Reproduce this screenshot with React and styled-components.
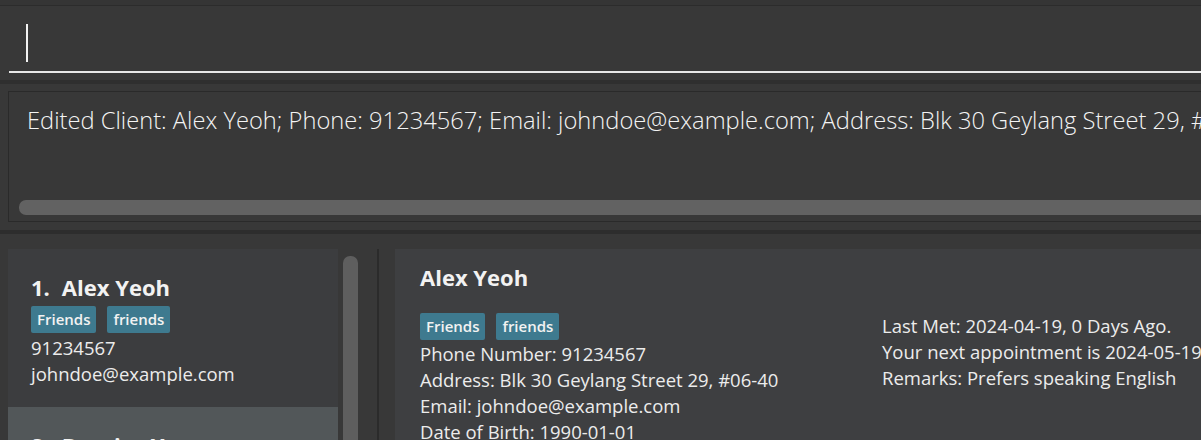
import React from 'react';
import styled, { createGlobalStyle } from 'styled-components';

const GlobalStyle = createGlobalStyle`
  html, body {
    margin: 0;
    padding: 0;
    background: #383838;
    overflow: hidden;
  }
  body {
    font-family: 'Open Sans', 'Noto Sans', sans-serif;
    color: #fff;
  }
`;

const Window = styled.div`
  width: 1201px;
  height: 440px;
  display: flex;
  flex-direction: column;
  background: #383838;
  overflow: hidden;
  border-top: 5px solid #353535;
`;

const CommandBar = styled.div`
  height: 67px;
  padding: 0 0 7px 9px;
  border-top: 1px solid #2c2c2c;
  border-bottom: 4px solid #2f2f2f;
  display: flex;
  flex-direction: column;
  justify-content: flex-end;
`;

const CommandField = styled.div`
  height: 56px;
  border-bottom: 2px solid #e8e8e8;
  padding: 7px 0 0 17px;
  box-sizing: border-box;
`;

const Caret = styled.div`
  width: 2px;
  height: 38px;
  background: #f2f2f2;
`;

const ResultPane = styled.div`
  padding: 7px 0 8px 8px;
  border-bottom: 4px solid #2d2d2d;
`;

const ResultBox = styled.div`
  height: 131px;
  border: 1px solid #2a2a2a;
  border-right: none;
  box-sizing: border-box;
  padding: 12px 0 0 18px;
  display: flex;
  flex-direction: column;
  justify-content: space-between;
  overflow: hidden;
`;

const ResultText = styled.div`
  font-size: 23.7px;
  font-weight: 300;
  white-space: nowrap;
  color: #f4f4f4;
`;

const HScroll = styled.div`
  height: 15px;
  margin: 0 0 6px -8px;
  background: #626262;
  border-radius: 7px 0 0 7px;
`;

const Lower = styled.div`
  flex: 1;
  display: flex;
  padding-top: 15px;
  min-height: 0;
`;

const ListPane = styled.div`
  width: 379px;
  display: flex;
  padding-left: 8px;
  box-sizing: border-box;
  gap: 5px;
  border-right: 2px solid #2b2b2b;
`;

const ListCards = styled.div`
  width: 330px;
  display: flex;
  flex-direction: column;
`;

const VScroll = styled.div`
  width: 15px;
  margin-top: 7px;
  background: #5e5e5e;
  border-radius: 7px 7px 0 0;
`;

const ListCard = styled.div`
  background: ${({ $selected }) => ($selected ? '#525759' : '#3c3d3f')};
  padding: 23px 0 0 23px;
  height: ${({ $selected }) => ($selected ? 'auto' : '158px')};
  flex: ${({ $selected }) => ($selected ? 1 : 'none')};
  box-sizing: border-box;
`;

const CardTitle = styled.div`
  font-size: 22px;
  font-weight: 700;
  color: #f2f2f2;
  display: flex;
  gap: 12px;
  line-height: 30px;
`;

const TagRow = styled.div`
  display: flex;
  gap: 11px;
  margin: ${({ $m }) => $m || '4px 0 2px'};
`;

const Tag = styled.span`
  background: #3e7a8f;
  color: #f2f2f2;
  font-size: 15px;
  font-weight: 600;
  padding: 0 6px;
  height: 27px;
  line-height: 27px;
  border-radius: 2px;
`;

const Line = styled.div`
  font-size: 18.5px;
  color: #ececec;
  line-height: 26px;
  white-space: nowrap;
`;

const DetailPane = styled.div`
  flex: 1;
  padding-left: 16px;
  overflow: hidden;
`;

const DetailCard = styled.div`
  background: #3e3f41;
  height: 100%;
  padding: 13px 0 0 25px;
  box-sizing: border-box;
`;

const DetailName = styled.div`
  font-size: 22px;
  font-weight: 700;
  color: #f2f2f2;
  line-height: 30px;
`;

const Columns = styled.div`
  display: grid;
  grid-template-columns: 462px 1fr;
  margin-top: 21px;
`;

const App = () => {
  return (
    <>
      <GlobalStyle />
      <Window>
        <CommandBar>
          <CommandField>
            <Caret />
          </CommandField>
        </CommandBar>
        <ResultPane>
          <ResultBox>
            <ResultText>
              Edited Client: Alex Yeoh; Phone: 91234567; Email: johndoe@example.com; Address: Blk 30 Geylang Street 29, #06-40
            </ResultText>
            <HScroll />
          </ResultBox>
        </ResultPane>
        <Lower>
          <ListPane>
            <ListCards>
              <ListCard>
                <CardTitle>
                  <span>1.</span>
                  <span>Alex Yeoh</span>
                </CardTitle>
                <TagRow>
                  <Tag>Friends</Tag>
                  <Tag>friends</Tag>
                </TagRow>
                <Line>91234567</Line>
                <Line>johndoe@example.com</Line>
              </ListCard>
              <ListCard $selected>
                <CardTitle>
                  <span>2.</span>
                  <span>Bernice Yu</span>
                </CardTitle>
              </ListCard>
            </ListCards>
            <VScroll />
          </ListPane>
          <DetailPane>
            <DetailCard>
              <DetailName>Alex Yeoh</DetailName>
              <Columns>
                <div>
                  <TagRow $m="0 0 1px">
                    <Tag>Friends</Tag>
                    <Tag>friends</Tag>
                  </TagRow>
                  <Line>Phone Number: 91234567</Line>
                  <Line>Address: Blk 30 Geylang Street 29, #06-40</Line>
                  <Line>Email: johndoe@example.com</Line>
                  <Line>Date of Birth: 1990-01-01</Line>
                </div>
                <div>
                  <Line>Last Met: 2024-04-19, 0 Days Ago.</Line>
                  <Line>Your next appointment is 2024-05-19</Line>
                  <Line>Remarks: Prefers speaking English</Line>
                </div>
              </Columns>
            </DetailCard>
          </DetailPane>
        </Lower>
      </Window>
    </>
  );
};

export default App;
